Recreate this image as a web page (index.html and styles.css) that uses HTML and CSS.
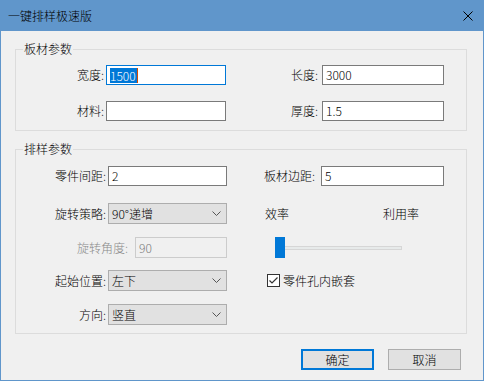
FILE: index.html
```html
<!DOCTYPE html>
<html lang="zh">
<head>
<meta charset="utf-8">
<title>一键排样极速版</title>
<link rel="stylesheet" href="styles.css">
</head>
<body>
<div class="window">
  <div class="titlebar">
    <span class="title">一键排样极速版</span>
    <svg class="close" width="10" height="10" viewBox="0 0 10 10"><path d="M0.5 0.5L9.5 9.5M9.5 0.5L0.5 9.5" stroke="#000" stroke-width="1" fill="none"/></svg>
  </div>
  <div class="content">
    <div class="group group-board">
      <div class="group-title">板材参数</div>
      <div class="board-grid">
        <div class="lbl lbl-a">宽度:</div>
        <div class="field field-focus"><span class="sel">1500</span><span class="caret"></span></div>
        <div class="lbl lbl-b">长度:</div>
        <div class="field field-wide">3000</div>
        <div class="lbl lbl-a">材料:</div>
        <div class="field"></div>
        <div class="lbl lbl-b">厚度:</div>
        <div class="field field-wide">1.5</div>
      </div>
    </div>

    <div class="group group-nest">
      <div class="group-title">排样参数</div>
      <div class="nest-grid">
        <div class="lcell">
          <span class="lbl">零件间距:</span>
          <div class="field ctl">2</div>
        </div>
        <div class="rcell">
          <span class="lbl">板材边距:</span>
          <div class="field field-margin">5</div>
        </div>

        <div class="lcell">
          <span class="lbl">旋转策略:</span>
          <div class="combo ctl"><span>90°递增</span><svg class="chev" width="9" height="5" viewBox="0 0 9 5"><path d="M0.5 0.5L4.5 4.5L8.5 0.5" stroke="#555" stroke-width="1" fill="none"/></svg></div>
        </div>
        <div class="rcell">
          <span class="lbl lbl-eff">效率</span>
          <span class="lbl lbl-use">利用率</span>
        </div>

        <div class="lcell">
          <span class="lbl lbl-dis">旋转角度:</span>
          <div class="field field-dis">90</div>
        </div>
        <div class="rcell">
          <div class="slider">
            <div class="track"></div>
            <div class="thumb"></div>
          </div>
        </div>

        <div class="lcell">
          <span class="lbl">起始位置:</span>
          <div class="combo ctl"><span>左下</span><svg class="chev" width="9" height="5" viewBox="0 0 9 5"><path d="M0.5 0.5L4.5 4.5L8.5 0.5" stroke="#555" stroke-width="1" fill="none"/></svg></div>
        </div>
        <div class="rcell">
          <svg class="check" width="13" height="13" viewBox="0 0 13 13"><rect x="0.5" y="0.5" width="12" height="12" fill="#fff" stroke="#333"/><path d="M2.5 6.5L5 9L10.5 3.5" stroke="#333" stroke-width="1.2" fill="none"/></svg>
          <span class="lbl lbl-check">零件孔内嵌套</span>
        </div>

        <div class="lcell">
          <span class="lbl">方向:</span>
          <div class="combo ctl"><span>竖直</span><svg class="chev" width="9" height="5" viewBox="0 0 9 5"><path d="M0.5 0.5L4.5 4.5L8.5 0.5" stroke="#555" stroke-width="1" fill="none"/></svg></div>
        </div>
        <div class="rcell"></div>
      </div>
    </div>

    <div class="buttons">
      <div class="btn btn-default">确定</div>
      <div class="btn">取消</div>
    </div>
  </div>
</div>
</body>
</html>
```

FILE: styles.css
```css
* { box-sizing: border-box; }
html, body { margin: 0; padding: 0; }
body {
  font-family: "Noto Sans CJK SC", "Noto Sans", sans-serif;
  font-size: 12px;
  font-weight: 300;
  color: #000;
  background: #f0f0f0;
}
.window {
  width: 484px;
  height: 381px;
  border: 1px solid #6096cb;
  background: #f0f0f0;
  display: flex;
  flex-direction: column;
}
.titlebar {
  height: 30px;
  background: #6096cb;
  display: flex;
  align-items: center;
  padding: 0 10px 0 7px;
  flex: none;
}
.title { line-height: 16px; flex: 1; }
.close { display: block; }
.content {
  padding: 0 16px 0 14px;
  display: flex;
  flex-direction: column;
}
.group {
  border: 1px solid #dcdcdc;
}
.group-title {
  display: table;
  margin: -9px 0 0 7px;
  padding: 0 1px;
  line-height: 16px;
  background: #f0f0f0;
}
.group-board { margin-top: 18px; height: 82px; }
.board-grid {
  margin-top: 8px;
  display: grid;
  grid-template-columns: 90px 120px 96px 122px;
  grid-template-rows: 20px 20px;
  row-gap: 16px;
  align-items: center;
}
.lbl { line-height: 16px; white-space: nowrap; }
.lbl-a { text-align: right; padding-right: 2px; }
.lbl-b { text-align: right; padding-right: 4px; }
.field {
  height: 20px;
  border: 1px solid #7a7a7a;
  background: #fff;
  padding: 0 3px;
  line-height: 18px;
  display: flex;
  align-items: center;
}
.field-focus { border-color: #0078d7; }
.sel {
  background: #0078d7;
  color: #fff;
  line-height: 15px;
  padding: 0 1px 0 0;
}
.caret {
  width: 1px;
  height: 15px;
  background: #d44a00;
}
.group-nest { margin-top: 18px; height: 185px; }
.nest-grid {
  margin-top: 9px;
  display: grid;
  grid-template-columns: 211px 217px;
  grid-template-rows: 37px 34px 33px 34px 21px;
}
.lcell {
  display: flex;
  justify-content: flex-end;
  align-items: flex-start;
  height: 21px;
  gap: 2px;
}
.lcell .lbl { align-self: center; }
.lcell:first-child { height: 20px; }
.ctl { width: 119px; }
.rcell {
  display: flex;
  align-items: center;
  height: 21px;
  padding-left: 37px;
}
.nest-grid .rcell:nth-child(2) { height: 20px; }
.field-margin { width: 123px; margin-left: auto; }
.lbl-eff { margin-left: 1px; }
.lbl-use { margin-left: 94px; }
.combo {
  height: 21px;
  border: 1px solid #adadad;
  background: #e1e1e1;
  display: flex;
  align-items: center;
  padding: 0 5px 0 3px;
  justify-content: space-between;
}
.chev { display: block; }
.lbl-dis { color: #8a8a8a; margin-right: 5px; }
.field-dis {
  width: 92px;
  height: 21px;
  border-color: #cccccc;
  background: #f0f0f0;
  color: #7a7a7a;
}
.slider {
  position: relative;
  width: 127px;
  height: 21px;
  margin-left: 11px;
  display: flex;
  align-items: center;
}
.track {
  flex: 1;
  height: 4px;
  background: #e7eaea;
  border: 1px solid #d6d6d6;
  margin-top: 1px;
}
.thumb {
  position: absolute;
  left: 0;
  top: 0;
  width: 10px;
  height: 21px;
  background: #0078d7;
}
.check { display: block; margin-left: 3px; }
.lbl-check { margin-left: 3px; }
.buttons {
  margin-top: 15px;
  display: flex;
  justify-content: flex-end;
  gap: 14px;
  padding-right: 6px;
}
.btn {
  width: 73px;
  height: 21px;
  border: 1px solid #adadad;
  background: #e1e1e1;
  display: flex;
  align-items: center;
  justify-content: center;
  line-height: 16px;
}
.btn-default { border: 2px solid #0078d7; }
```
